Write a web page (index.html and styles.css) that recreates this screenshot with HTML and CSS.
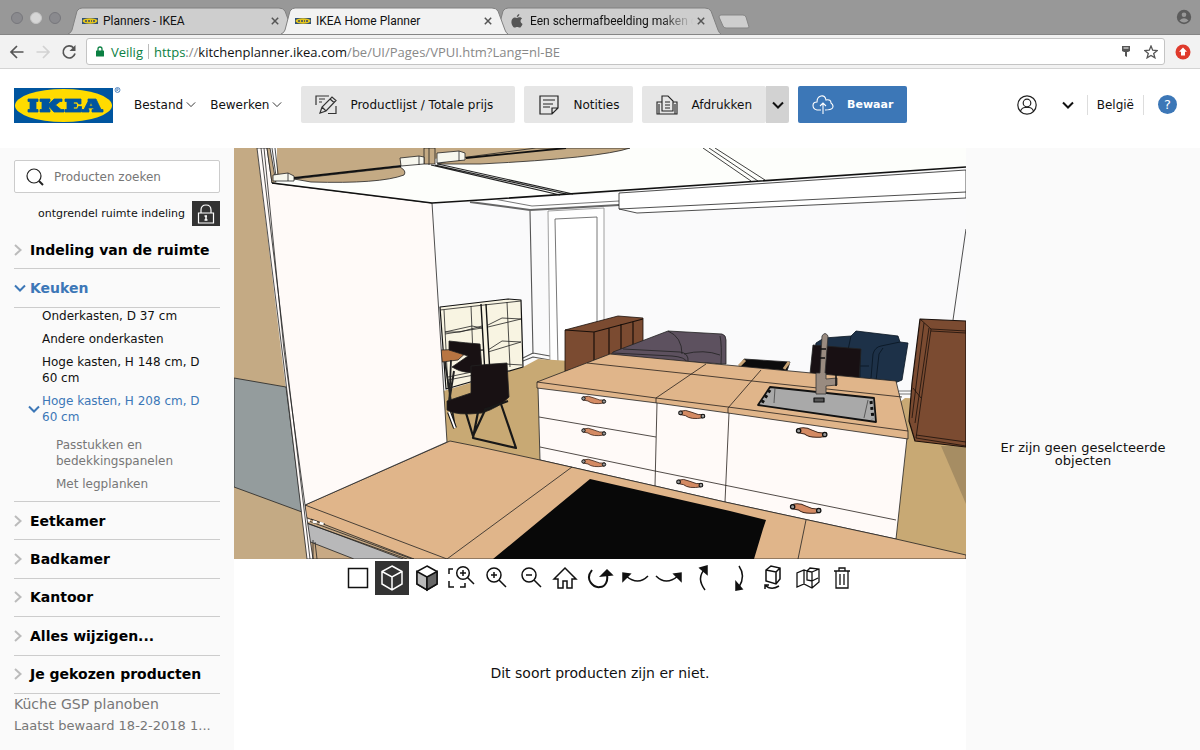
FILE: index.html
```html
<!DOCTYPE html>
<html lang="nl-BE">
<head>
<meta charset="utf-8">
<title>IKEA Home Planner</title>
<link rel="stylesheet" href="styles.css">
</head>
<body>
<svg class="defs" aria-hidden="true">
  <symbol id="tab-shape" viewBox="0 0 227 27" preserveAspectRatio="none"><path d="M0 27 Q3 26 4 23 L9 4 Q11 1 14 1 H211 Q215 1 217 4 L224 23 Q225 26 227 27" stroke="#808080"/></symbol>
  <symbol id="ikea-mini" viewBox="0 0 16 6"><rect width="16" height="6" fill="#2d4f77"/><ellipse cx="8" cy="3" rx="7.5" ry="2.7" fill="#e5c51c"/><path d="M3 3H5M6 3H8M9 3H10M11 3H13" stroke="#33496a" stroke-width="1.6"/></symbol>
  <symbol id="close" viewBox="0 0 8 8"><path d="M.8.8 7.2 7.2M7.2.8.8 7.2" stroke="#555" stroke-width="1.5"/></symbol>
  <symbol id="down" viewBox="0 0 12 8"><path d="M1 1.5 6 6.5 11 1.5" fill="none" stroke="currentColor"/></symbol>
  <symbol id="right" viewBox="0 0 8 12"><path d="M1 1 6.5 6 1 11" fill="none" stroke="currentColor"/></symbol>
  <symbol id="handle" viewBox="0 0 26 11"><path d="M2 3 Q7 1 13 4 T24 6 L23 9 Q12 11 7 7 L2 6Z" fill="#d48a63" stroke="#3b241b" stroke-width=".8"/><circle cx="2.5" cy="4.500" r="1.700" fill="#999" stroke="#111"/><circle cx="23" cy="7.500" r="1.700" fill="#999" stroke="#111"/></symbol>
</svg>

<div class="browser">
  <div class="tabstrip">
    <div class="lights"><i></i><i class="light-on"></i><i></i></div>
    <div class="tabs">
      <div class="tab">
        <svg class="tab-bg"><use href="#tab-shape"/></svg>
        <svg class="favicon"><use href="#ikea-mini"/></svg>
        <span class="tab-title">Planners - IKEA</span>
        <button class="tab-close" aria-label="Sluiten"><svg><use href="#close"/></svg></button>
      </div>
      <div class="tab tab-active">
        <svg class="tab-bg"><use href="#tab-shape"/></svg>
        <svg class="favicon"><use href="#ikea-mini"/></svg>
        <span class="tab-title">IKEA Home Planner</span>
        <button class="tab-close" aria-label="Sluiten"><svg><use href="#close"/></svg></button>
      </div>
      <div class="tab">
        <svg class="tab-bg"><use href="#tab-shape"/></svg>
        <svg class="apple" viewBox="0 0 12 14"><path d="M8.300 0C8.500 1.600 7.200 3 5.800 3 5.700 1.500 7 .2 8.300 0ZM6 3.900C6.800 3.900 7.400 3.300 8.700 3.300 9.700 3.300 10.600 3.900 11.100 4.600 8.800 6 9.200 9 11.500 9.900 10.800 11.900 9.700 13.600 8.600 13.600 7.700 13.600 7.300 13 6.200 13 5.100 13 4.600 13.600 3.800 13.600 2.200 13.600.4 10.600.4 7.900.4 5 2.200 3.400 3.900 3.400 4.800 3.400 5.500 3.900 6 3.900Z" fill="#555"/></svg>
        <span class="tab-title tab-faded">Een schermafbeelding maken o</span>
        <button class="tab-close" aria-label="Sluiten"><svg><use href="#close"/></svg></button>
      </div>
    </div>
    <button class="new-tab" aria-label="Nieuw tabblad"><svg viewBox="0 0 32 16"><path d="M3 1H25Q27 1 28 3L31 13Q31 14 29 14H8Q6 14 5 12L1 3Q1 1 3 1Z" fill="#cecece" stroke="#858585"/></svg></button>
    <svg class="profile" viewBox="0 0 16 16"><circle cx="8" cy="8" r="7.200" fill="#5c5c5c"/><circle cx="8" cy="5.700" r="2.300" fill="#999"/><path d="M3.500 11.500Q8 7 12.500 11.500 8 15.500 3.500 11.500Z" fill="#999"/></svg>
  </div>
  <div class="navbar">
    <button class="nav-btn" aria-label="Terug"><svg viewBox="0 0 16 16"><path d="M14.500 8H2M8 2 2 8 8 14" fill="none" stroke="#555" stroke-width="1.700"/></svg></button>
    <button class="nav-btn" aria-label="Vooruit"><svg viewBox="0 0 16 16"><path d="M1.500 8H14M8 2 14 8 8 14" fill="none" stroke="#d2d2d2" stroke-width="1.700"/></svg></button>
    <button class="nav-btn" aria-label="Vernieuwen"><svg viewBox="0 0 16 16"><path d="M12.700 4A6 6 0 1 0 14 9.500" fill="none" stroke="#555" stroke-width="1.700"/><path d="M14.500 1V7H8.500Z" fill="#555"/></svg></button>
    <div class="address">
      <svg class="secure" viewBox="0 0 8 11"><path d="M2 5V3Q2 1 4 1T6 3V5" fill="none" stroke="#0b8043" stroke-width="1.300"/><rect y="4.500" width="8" height="6" rx=".6" fill="#0b8043"/></svg>
      <span class="green">Veilig</span><span class="bar"></span>
      <span class="url"><span class="green">https</span>://<b>kitchenplanner.ikea.com</b>/be/UI/Pages/VPUI.htm?Lang=nl-BE</span>
      <svg class="key" viewBox="0 0 10 13"><path d="M1 1H9V6L7 7H6V12L4 11V7H3L1 6Z" fill="#555"/><path d="M2.500 3H7.500" stroke="#fff"/></svg>
      <svg class="star" viewBox="0 0 14 14"><path d="M7 1 8.700 5.200 13.200 5.500 9.700 8.400 10.900 12.800 7 10.400 3.100 12.800 4.300 8.400.8 5.500 5.300 5.200Z" fill="none" stroke="#555" stroke-width="1.300"/></svg>
    </div>
    <svg class="update" viewBox="0 0 16 16"><circle cx="8" cy="8" r="7.500" fill="#df3a2c"/><path d="M8 3.500 12 7.800H10V11.500H6V7.800H4Z" fill="#fff"/></svg>
  </div>
</div>

<header class="header">
  <svg class="logo" viewBox="0 0 107 38" role="img" aria-label="IKEA">
    <rect y="2" width="99" height="35" fill="#00559f"/><ellipse cx="49.500" cy="19.500" rx="48.500" ry="16.500" fill="#ffdb00"/>
    <g fill="#00559f" stroke="#00559f" stroke-width=".8"><path d="M14 13H24V15.500H22V23.500H24V26H14V23.500H16V15.500H14Z"/><path d="M26 13H36V15.500H35V18L40 13H48V15.500H46L41.500 19 47 23.500H50V26H40L35 20.500V23.500H36V26H26V23.500H28V15.500H26Z"/><path d="M51 13H67V18H64.500L63.500 16H59.500V18H62.500V21H59.500V23H63.500L64.500 20.500H67.500V26H51V23.500H53V15.500H51Z"/><path fill-rule="evenodd" d="M74 13H82L87 23.500H89V26H78V23.500H80L79.500 22H74.500L74 23.500H75V26H68V23.500H70L74 15.500ZM77 16.500 75.500 20H78.500Z"/></g>
    <circle cx="103.500" cy="4" r="2.500" fill="none" stroke="#3974b5" stroke-width=".8"/><path d="M102.700 5.500V2.600H104.200V4H103L104.500 5.500" fill="none" stroke="#3974b5" stroke-width=".6"/>
  </svg>
  <nav class="menus">
    <button class="menu">Bestand <svg><use href="#down"/></svg></button>
    <button class="menu">Bewerken <svg><use href="#down"/></svg></button>
  </nav>
  <div class="actions">
    <button class="action list"><svg viewBox="0 0 22 20"><path d="M1 10V1H14M4 4H10M4 7H7M5 18 7 12 17 2 21 5.500 11 16ZM7 12 11 16M15 4 19 7.500M13 18.500H21V11" fill="none" stroke="#333" stroke-width="1.200"/></svg>Productlijst / Totale prijs</button>
    <button class="action"><svg viewBox="0 0 22 20"><path d="M2 1H20V13L14 19H2ZM14 19V13H20M5 5H17M5 9H15M5 12H12" fill="none" stroke="#222" stroke-width="1.200"/></svg>Notities</button>
    <div class="split"><button class="action"><svg viewBox="0 0 22 20"><path d="M6 16V1H12L17 6V16ZM6 7H1V19H21V7H17M9 7H14M9 10H14M9 13H14M3 9V19M19 9V19" fill="none" stroke="#222" stroke-width="1.100"/></svg>Afdrukken</button><button class="split-arrow" aria-label="Afdrukopties"><svg><use href="#down"/></svg></button></div>
    <button class="action save"><svg viewBox="0 0 22 20"><path d="M9 15H5Q1 14 1 10.500T5 7Q5 2 9 1T14 5Q19 4 19 8 22 10 20.500 13 19 15 13 15M11 19V8M8 11 11 8 14 11" fill="none" stroke="#fff" stroke-width="1.100"/></svg>Bewaar</button>
  </div>
  <div class="account">
    <button class="plain" aria-label="Profiel"><svg class="user" viewBox="0 0 20 20"><g fill="none" stroke="#222" stroke-width="1.200"><circle cx="10" cy="10" r="9.200"/><circle cx="10" cy="8" r="3.800"/><path d="M3.500 16Q5 12.500 8 12.500H12Q15 12.500 16.500 16"/></g></svg></button>
    <button class="plain" aria-label="Meer"><svg class="chev"><use href="#down"/></svg></button>
    <a class="country" href="#">België</a>
    <button class="help" aria-label="Help">?</button>
  </div>
</header>

<main class="main">
  <aside class="sidebar">
    <label class="search"><svg viewBox="0 0 18 18"><circle cx="8" cy="8" r="7" fill="none" stroke="#222" stroke-width="1.200"/><path d="M13 13 17 17" stroke="#222" stroke-width="2"/></svg><input type="text" placeholder="Producten zoeken" aria-label="Producten zoeken"></label>
    <div class="unlock"><span>ontgrendel ruimte indeling</span><button aria-label="Ontgrendel"><svg viewBox="0 0 18 20"><path d="M4 9V6Q4 1 9 1T14 6V9M1.500 9H16.500V19H1.500Z" fill="none" stroke="#fff" stroke-width="1.200"/><path d="M9 12V16M7.500 12H10M7.500 16H10.500" stroke="#fff" stroke-width="1.500"/></svg></button></div>
    <nav class="groups">
      <button class="group"><svg class="r"><use href="#right"/></svg>Indeling van de ruimte</button>
      <button class="group open"><svg class="d"><use href="#down"/></svg>Keuken</button>
      <div class="items">
        <a href="#">Onderkasten, D 37 cm</a>
        <a href="#">Andere onderkasten</a>
        <a href="#">Hoge kasten, H 148 cm, D 60 cm</a>
        <a href="#" class="current"><svg><use href="#down"/></svg>Hoge kasten, H 208 cm, D 60 cm</a>
        <div class="subitems"><a href="#">Passtukken en bedekkingspanelen</a><a href="#">Met legplanken</a></div>
      </div>
      <button class="group"><svg class="r"><use href="#right"/></svg>Eetkamer</button>
      <button class="group"><svg class="r"><use href="#right"/></svg>Badkamer</button>
      <button class="group"><svg class="r"><use href="#right"/></svg>Kantoor</button>
      <button class="group"><svg class="r"><use href="#right"/></svg>Alles wijzigen...</button>
      <button class="group"><svg class="r"><use href="#right"/></svg>Je gekozen producten</button>
    </nav>
    <div class="project"><p>Küche GSP planoben</p><p class="saved">Laatst bewaard 18-2-2018 1...</p></div>
  </aside>

  <section class="center">
    <svg class="scene" viewBox="234 148 732 411" role="img" aria-label="3D-weergave van de keuken">
      <rect x="234" y="148" width="732" height="411" fill="#fafafb"/>
      <g stroke="#222" stroke-width=".8" stroke-linejoin="round">
      <!-- ceiling mouldings -->
      <path d="M272 183 277 148H966V168L730 183 432 203Z" fill="#fdfefb" stroke="none"/>
      <path d="M480 201 530 210 619 206 619 193 530 198Z" fill="#fff" stroke="none"/>
      <path d="M470 202 530 210 619 205" fill="none" stroke="#666" stroke-width="2"/>
      <path d="M494 199 532 206 619 201" fill="none" stroke="#555"/>
      <!-- wall, door -->
      <path d="M530 211 533 354M523 358 533 353 550 356M523 361 533 357 550 360" fill="none" stroke="#555" stroke-width="1.100"/>
      <path d="M548 211 604 208V365H550Z" fill="#fefefe" stroke="#888"/><path d="M555 219 597 217V365H558Z" fill="#fff" stroke="#555"/>
      <path d="M966 229 953 320" fill="none"/>
      <!-- floor -->
      <path d="M440 392 523 367 538 359 620 364V480L447 450Z" fill="#c8a974" stroke="none"/>
      <path d="M890 410 905 398 966 400V559L880 540Z" fill="#c8a974" stroke="none"/>
      <path d="M941 446H966V504Z" fill="#a68d63" stroke="none"/>
      <!-- shelves -->
      <path d="M440 307 508 299 521 300 523 367 446 389Z" fill="#f8f4e2" stroke="#111" stroke-width="1.200"/>
      <path d="M440 310 484 305 521 301M444 310 448 389" fill="none" stroke="#222"/>
      <path d="M486 304 490 374M481 304 485 374" fill="none" stroke="#111" stroke-width="1.400"/>
      <path d="M471 306 474 380M507 302 510 367M445 332 472 326 482 328 445 334M445 332H460L482 326M488 325 502 318 521 319 488 327M446 354 472 349 483 350 447 357M488 350 502 341 521 342 488 352M448 377 472 372 484 373 448 380M490 370 505 364 522 365" fill="none" stroke="#222"/>
      <!-- dining table and chairs -->
      <path d="M441 350 470 349 458 360 442 362Z" fill="#b87542"/><path d="M445 362 455 428M451 360 449 410" fill="none" stroke="#222" stroke-width="1.800"/>
      <path d="M449 341Q466 343 480 344L482 370Q466 376 452 367L468 356 449 350Z" fill="#181113"/>
      <path d="M454 371 448 409M477 371 490 382" fill="none" stroke="#222" stroke-width="2"/>
      <path d="M471 366 Q489 364 507 363L509 397Q500 407 482 413 456 416 447 410V401L471 393Z" fill="#181113"/>
      <path d="M466 413 473 436 486 408M478 412 473 438 516 448 501 404M484 410 508 401" fill="none" stroke="#181818" stroke-width="2.200"/>
      <path d="M449 412 455 428" stroke="#111" stroke-width="4"/><path d="M449 412 455 428" stroke="#fff" stroke-width="2"/>
      <!-- sideboard, sofa, coffee table -->
      <path d="M565 330 618 316 643 318V350L594 365 565 371Z" fill="#7b4b31" stroke="#1a100b"/><path d="M565 330 594 332 643 319M594 332V368M609 328V362M621 324V358M633 321V350" fill="none" stroke="#1a100b" stroke-width="1.200"/>
      <path d="M606 363 613 352 668 331 722 334Q726 335 726 340V364L690 362Z" fill="#5d515f"/>
      <path d="M623 349 680 352Q689 353 688 362M613 353 672 356Q685 357 687 362M668 331Q682 337 682 354M684 354Q704 349 720 355M720 336Q722 345 721 364" fill="none"/>
      <path d="M739 367 744 359 790 362 787 371Z" fill="#0c0c0c"/><path d="M739 366 745 360M784 369 789 362" stroke="#c7a374" stroke-width="3"/>
      <!-- armchair and wardrobe -->
      <path d="M811 378 816 343 824 338 851 336 856 331 898 336 900 342 908 343 902 380 890 385 850 383Z" fill="#1d3148" stroke="#081421"/>
      <path d="M851 336 848 350 860 353V377M871 378 873 354Q875 347 881 346L900 342M876 381 879 354 883 348M860 366H869" fill="none" stroke="#081421"/>
      <path d="M813 345 861 349 859 380 810 374Z" fill="#181013"/>
      <path d="M899 391 911 391 M899 394 911 394" stroke="#555"/>
      <path d="M920 319 966 321V447L915 441 909 421 912 383Z" fill="#7b4b31" stroke="#1a100b" stroke-width="1.200"/>
      <path d="M920 319 931 329 966 331M931 329 916 438 966 446M924 323 912 418M929 328 915 423M913 388 921 398M916 435 966 442M931 331 966 333" fill="none" stroke="#1a100b"/>
      <!-- kitchen island -->
      <path d="M538 387 657 402 728 411 907 438 896 539 725 502 655 486 540 460Z" fill="#fffaf8"/>
      <path d="M537 382 610 354 896 381 908 431V439L728 413 657 403 537 388Z" fill="#e0b58a"/>
      <path d="M537 382 656 398 728 407 908 431M587 363 690 374 752 381 902 397M656 403V398L706 364M728 413V408L761 370M657 403 655 486M729 413 725 502M539 417 656 437M540 447 655 471 896 520" fill="none" stroke="#26201c"/>
      <path d="M770 387 874 398 876 422 758 405Z" fill="#a9a9a9" stroke="#111" stroke-width="1.800"/><path d="M775 388 774 403M868 400 864 418" fill="none" stroke="#444"/>
      <path d="M770 390 762 403M871 401 873 419" stroke="#111" stroke-width="3" stroke-dasharray="3 3"/><path d="M814 398H824V402H814Z" fill="#555" stroke="#111" stroke-width="1.200"/>
      <path d="M816 394V373H820L822 336Q825 331 828 336L825 373H826V379L837 378V385L826 386V394Z" fill="#998b80" stroke="#333"/><path d="M820 349H826M820 358H825M836 374V386" stroke="#111" stroke-width="1.500"/>
      <!-- front counter -->
      <path d="M305 505 450 441 480 447 540 460 655 486 725 502 896 539 966 555V559H308Z" fill="#e0b58a"/>
      <path d="M305 505 447 559 572 467M806 520 798 559" fill="none"/>
      <path d="M590 479 730 511 766 520 763 529 754 559H493Z" fill="#080808" stroke="none"/>
      <path d="M305 517 414 559H309Z" fill="#c8a984"/>
      <path d="M307 523 403 559H354L308 541Z" fill="#b8b8b9"/><path d="M306 520 412 559M306 523 407 559M311 519 325 524" fill="none" stroke="#222"/>
      <path d="M306 520 324 524" stroke="#fff" stroke-width="2.500" stroke-dasharray="4 3"/>
      <!-- left wall and tall panel -->
      <path d="M234 148H257L281 350 302 512 308 559H234Z" fill="#c4aa84" stroke="none"/>
      <path d="M234 378 286 387 302 512 234 487Z" fill="#949c9d"/>
      <path d="M257 148 267 148 272 183 432 203 447 442 305 505 313 559H307L283 358Z" fill="#fffaf8"/>
      <path d="M261 148 310 559M264 148 284 350 305 505M313 559V540M317 559 315 542" fill="none"/>
      <!-- upper cabinets -->
      <path d="M267 148 272 183H276L270 148Z" fill="#c4aa84"/>
      <path d="M277 148H630Q590 158 480 164L444 157 401 166 277 179Z" fill="#c4aa84" stroke="none"/>
      <path d="M294 179 401 165 444 163 464 158 966 150V167L480 201 432 203 272 183Z" fill="#fdfefb" stroke="none"/>
      <path d="M294 179 400 167Q407 171 404 175 380 184 311 182Z" fill="#c4aa84"/>
      <path d="M294 178 401 166 " stroke="#111" stroke-width="2"/>
      <path d="M437 164 460 158 536 148H630Q600 158 480 164Z" fill="#c4aa84"/>
      <path d="M466 158 566 148" stroke="#111" stroke-width="1.800"/>
      <path d="M424 148H435V164H424ZM429 148V165" fill="#c4aa84"/>
      <path d="M272 148 276 176M275 148 278 174" fill="none"/>
      <path d="M273 175 288 173 294 176V181H273ZM400 158 419 156 424 157V164L401 166ZM437 153 459 151 465 153V160L437 163Z" fill="#f7f7ee"/><path d="M288 173V181M419 156V165M459 151V161" stroke="#222"/>
      <path d="M431 165 560 195M435 165 566 194M438 164 573 194" fill="none" stroke="#222" stroke-width="1.200"/>
      <path d="M272 183 432 203 480 200 966 167" fill="none" stroke="#111" stroke-width="1.600"/>
      <path d="M703 148 751 181M709 148 758 181M715 148 765 180" fill="none" stroke="#111"/>
      <!-- ceiling beam -->
      <path d="M619 193 966 170V198L637 213 619 209Z" fill="#fff"/><path d="M619 209 966 192" fill="none"/>
      </g>
      <use href="#handle" x="581" y="394" width="26" height="11"/><use href="#handle" x="581" y="426" width="26" height="11"/><use href="#handle" x="581" y="457" width="26" height="11"/>
      <use href="#handle" x="677" y="408" width="30" height="12"/><use href="#handle" x="675" y="477" width="30" height="12"/><use href="#handle" x="794" y="425" width="36" height="14"/><use href="#handle" x="788" y="501" width="36" height="14"/>
    </svg>
    <div class="tools">
      <button aria-label="2D"><svg viewBox="0 0 28 28"><path d="M4.500 4.500H23.500V23.500H4.500Z"/></svg></button>
      <button class="on" aria-label="3D-lijnen"><svg viewBox="0 0 28 28"><path d="M14 2 24 7.500V20L14 26 4 20V7.500ZM4 7.500 14 13 24 7.500M14 13V26"/></svg></button>
      <button aria-label="3D"><svg viewBox="0 0 28 28"><path d="M14 2 24 7.500V20L14 26 4 20V7.500Z" fill="#fff"/><path d="M4 7.500 14 13V26L4 20Z" fill="#bbb"/><path d="M24 7.500 14 13V26L24 20Z" fill="#666"/></svg></button>
      <button aria-label="Zoom naar gebied"><svg viewBox="0 0 28 28"><path d="M6 5H2V10M2 17V23H7M13 23H18V19"/><circle cx="16" cy="9" r="6.300"/><path d="M16 6V12M13 9H19M20.500 13.500 27 20"/></svg></button>
      <button aria-label="Inzoomen"><svg viewBox="0 0 28 28"><circle cx="12" cy="11" r="7"/><path d="M12 8V14M9 11H15M17 16 24 23"/></svg></button>
      <button aria-label="Uitzoomen"><svg viewBox="0 0 28 28"><circle cx="12" cy="11" r="7"/><path d="M9 11H15M17 16 24 23"/></svg></button>
      <button aria-label="Startweergave"><svg viewBox="0 0 28 28"><path d="M3 15 14 4 25 15H21V24H16V17H12V24H7V15Z"/></svg></button>
      <button aria-label="Draaien"><svg viewBox="0 0 28 28"><path d="M6 6C-2 16 8 24 14 23 20 23 22 16 21 11" stroke-width="2"/><path d="M15 12 21 6 26 11Z" fill="#111"/></svg></button>
      <button aria-label="Links"><svg viewBox="0 0 28 28"><path d="M5 12Q17 22 27 12"/><path d="M2 17V9L9 10Z" fill="#111"/></svg></button>
      <button aria-label="Rechts"><svg viewBox="0 0 28 28"><path d="M1 12Q11 22 23 12"/><path d="M26 17V9L19 10Z" fill="#111"/></svg></button>
      <button aria-label="Omhoog"><svg viewBox="0 0 28 28"><path d="M15 26Q6 14 15 5"/><path d="M10 4 17 2V10Z" fill="#111"/></svg></button>
      <button aria-label="Omlaag"><svg viewBox="0 0 28 28"><path d="M14 2Q21 12 14 23"/><path d="M11 18V26L17 25Z" fill="#111"/></svg></button>
      <button aria-label="Object draaien"><svg viewBox="0 0 28 28"><path d="M7 6 12 2 21 4V15L17 20 7 17ZM7 6 17 8 21 4M17 8V20M6 21Q12 27 20 22M6 25V21H10"/></svg></button>
      <button aria-label="Wanden"><svg viewBox="0 0 28 28"><path d="M13 7 10 6 3 9V23L10 20 18 24 25 18V5L16 4 13 7V16L18 17V8L13 7M18 8 25 5M18 17 24 14M10 6V20M18 17V24" stroke-width="1.300"/></svg></button>
      <button aria-label="Verwijderen"><svg viewBox="0 0 28 28"><path d="M6 7H22M8 7V24H20V7M11 7V4H17V7M12 10V21M16 10V21" stroke-width="1.300"/></svg></button>
    </div>
    <p class="empty">Dit soort producten zijn er niet.</p>
  </section>

  <aside class="details"><p>Er zijn geen geselcteerde objecten</p></aside>
</main>
</body>
</html>
```

FILE: styles.css
```css
* { box-sizing: border-box; }
body {
  margin: 0;
  min-height: 100vh;
  display: flex;
  flex-direction: column;
  background: #fff;
  color: #111;
  font-family: "DejaVu Sans", sans-serif;
  font-size: 12px;
}
p { margin: 0; }
button { font: inherit; color: inherit; border: 0; padding: 0; background: none; }
a { color: inherit; text-decoration: none; }
svg { display: block; flex: none; }
.defs { position: absolute; width: 0; height: 0; }

/* browser window */
.browser { font-family: Roboto, sans-serif; }
.tabstrip { display: flex; height: 35px; align-items: flex-end; background: #989898; border-bottom: 1px solid #858585; }
.lights { display: flex; gap: 7px; width: 68px; padding: 0 0 10px 11px; }
.lights i { width: 12px; height: 12px; border-radius: 50%; background: #8a8a8e; border: 1px solid #77777c; }
.lights .light-on { background: #d6d6d6; border-color: #c4c4c4; }
.tabs { display: flex; }
.tab { position: relative; display: flex; align-items: center; width: 227px; height: 27px; padding: 0 12px 0 14px; }
.tab + .tab { margin-left: -14px; }
.tab-bg { position: absolute; inset: 0; width: 100%; height: 100%; fill: #cecece; }
.tab-active { z-index: 1; margin-bottom: -1px; }
.tab-active .tab-bg { fill: #f2f2f2; }
.favicon { position: relative; width: 16px; height: 6px; }
.apple { position: relative; width: 12px; height: 14px; margin: 0 5px 0 3px; }
.tab-title { position: relative; flex: 1; min-width: 0; margin-left: 5px; white-space: nowrap; }
.tab .apple + .tab-title { margin-left: 2px; }
.tab-faded { -webkit-mask-image: linear-gradient(to right, #000 80%, transparent); mask-image: linear-gradient(to right, #000 80%, transparent); }
.tab-close { position: relative; padding: 4px; }
.tab-close svg { width: 8px; height: 8px; }
.new-tab { margin: 0 0 4px -3px; }
.new-tab svg { width: 32px; height: 16px; }
.profile { width: 16px; height: 16px; margin: 0 8px 9px auto; }
.navbar { display: flex; align-items: center; gap: 10px; height: 34px; padding: 0 9px; background: #f2f2f2; border-bottom: 1px solid #d4d4d4; }
.nav-btn svg { width: 16px; height: 16px; }
.address { flex: 1; display: flex; align-items: center; height: 27px; margin-left: -1px; padding: 0 6px 0 9px; border: 1px solid #c4c4c4; border-radius: 3px; background: #fff; font-family: "Open Sans", sans-serif; font-size: 13px; line-height: 18px; color: #888; }
.secure { width: 8px; height: 11px; margin-right: 7px; }
.green { color: #0b8043; }
.bar { width: 1px; height: 15px; margin: 0 5px; background: #bbb; }
.url { flex: 1; }
.url b { font-weight: 400; color: #111; }
.key { width: 10px; height: 13px; margin-right: 13px; }
.star { width: 14px; height: 14px; }
.update { width: 16px; height: 16px; }

/* application header */
.header { display: flex; align-items: center; height: 79px; padding: 0 23px 8px 14px; }
.logo { width: 107px; height: 38px; }
.menus { display: flex; gap: 14px; margin-left: 13px; }
.menu { display: flex; align-items: center; gap: 3px; }
.menu svg { width: 10px; height: 7px; }
.actions { display: flex; gap: 9px; margin-left: 19px; }
.action { display: flex; align-items: center; height: 37px; padding: 0 14px; border-radius: 2px; background: #e6e6e6; white-space: nowrap; }
.action svg { width: 22px; height: 20px; margin-right: 13px; }
.list { min-width: 214px; }
.split { display: flex; }
.split-arrow { display: flex; align-items: center; justify-content: center; width: 23px; background: #d2d2d2; border-radius: 0 2px 2px 0; }
.split-arrow svg, .chev { width: 12px; height: 8px; stroke-width: 2px; }
.save { background: #3c77b7; color: #fff; font-size: 11px; font-weight: 700; }
.account { display: flex; align-items: center; margin-left: auto; }
.user { width: 20px; height: 20px; margin-right: 25px; }
.chev { margin-right: 13px; }
.country { padding: 3px 9px; border: solid #ddd; border-width: 0 1px; }
.help { width: 19px; height: 19px; margin-left: 14px; border-radius: 50%; background: #3c77b7; color: #fff; font-size: 13px; }

/* main area */
.main { flex: 1; display: grid; grid-template-columns: 234px 1fr 234px; }
.sidebar { display: flex; flex-direction: column; padding: 12px 14px 14px; background: #fafafa; }
.search { display: flex; align-items: center; height: 33px; padding: 0 11px; border: 1px solid #ccc; border-radius: 2px; background: #fff; }
.search svg { width: 18px; height: 18px; }
.search input { flex: 1; min-width: 0; margin-left: 10px; padding: 0; border: 0; outline: 0; background: none; font: inherit; }
.search input::placeholder { color: #777; opacity: 1; }
.unlock { display: flex; align-items: center; justify-content: flex-end; gap: 7px; margin: 8px 0 5px; font-size: 11px; white-space: nowrap; }
.unlock button { display: grid; place-items: center; width: 28px; height: 25px; background: #333; }
.unlock svg { width: 18px; height: 20px; }
.groups { flex: 1; display: flex; flex-direction: column; }
.group { flex: 1 0 38px; display: flex; align-items: center; border-bottom: 1px solid #ccc; color: #000; font-size: 14px; font-weight: 700; white-space: nowrap; }
.group .r { width: 8px; height: 12px; margin-right: 8px; color: #bbb; stroke-width: 2px; }
.group .d { width: 12px; height: 8px; margin-right: 4px; stroke-width: 2px; }
.group.open, .items .current { color: #3c77b7; }
.items { display: flex; flex-direction: column; gap: 7px; padding: 0 10px 9px 28px; border-bottom: 1px solid #ccc; line-height: 16px; }
.items .current { position: relative; }
.current svg { position: absolute; left: -14px; top: 12px; width: 12px; height: 8px; stroke-width: 2px; }
.subitems { display: flex; flex-direction: column; gap: 7px; margin-top: 5px; padding-left: 14px; color: #777; }
.project { color: #777; line-height: 21px; white-space: nowrap; font-size: 14px; }
.saved { font-size: 13px; }
.center { display: flex; flex-direction: column; min-width: 0; }
.scene { width: 100%; height: auto; }
.tools { display: flex; justify-content: space-between; width: 519px; margin: 2px auto 0; }
.tools button { display: grid; place-items: center; width: 34px; height: 34px; color: #111; }
.tools .on { background: #333; color: #fff; }
.tools svg { width: 28px; height: 28px; fill: none; stroke: currentColor; stroke-width: 1.5px; }
.empty { flex: 1; display: grid; place-items: center; font-size: 14px; }
.details { display: grid; place-items: center; padding: 10px 30px 0; background: #fafafa; text-align: center; font-size: 13px; line-height: 13px; }
```
